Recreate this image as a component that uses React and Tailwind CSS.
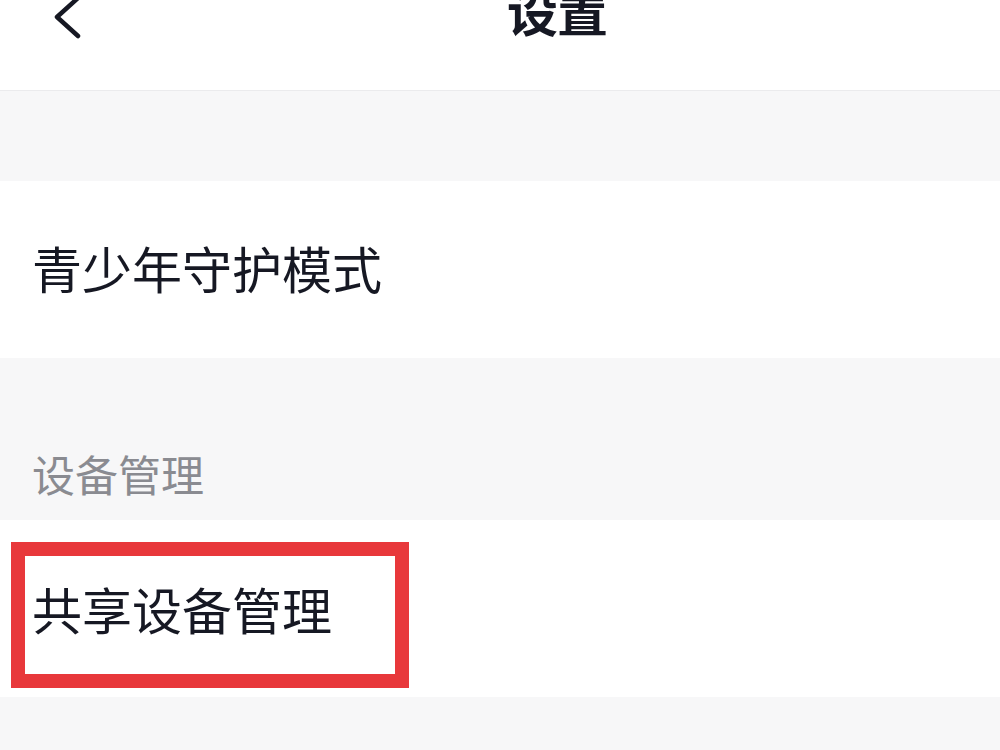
export default function App() {
    return (
        <div
            className="w-[1000px] h-[750px] overflow-hidden bg-[#f7f7f8] text-[#161823]"
            style={{ fontFamily: '"Noto Sans CJK SC", "Noto Sans", sans-serif' }}
        >
            {/* 顶部导航 */}
            <div className="h-[91px] bg-white border-b border-[#ebebed] flex items-start">
                <svg
                    className="ml-[48px] shrink-0"
                    width="36"
                    height="40"
                    viewBox="0 0 36 40"
                    fill="none"
                    stroke="#161823"
                    strokeWidth="4.5"
                    strokeLinecap="round"
                    strokeLinejoin="round"
                >
                    <path d="M30 -2 L9 17 L30 36" />
                </svg>
                <h1 className="ml-[423px] -mt-[15px] text-[51px] leading-none font-bold tracking-[-1px]">
                    设置
                </h1>
            </div>

            <div className="h-[90px]" />

            <div className="h-[177px] bg-white flex items-center pl-[32px] pb-[6px]">
                <span className="text-[50px] leading-none">青少年守护模式</span>
            </div>

            <div className="h-[162px] pt-[94px] pl-[32px]">
                <span className="text-[43px] leading-none text-[#8a8b91]">设备管理</span>
            </div>

            <div className="relative h-[177px] bg-white flex items-center pl-[32px] pb-[2px]">
                <span className="text-[50px] leading-none">共享设备管理</span>
                <div className="absolute left-[11px] top-[22px] w-[398px] h-[146px] border-[14px] border-[#e8383b]" />
            </div>
        </div>
    );
}
